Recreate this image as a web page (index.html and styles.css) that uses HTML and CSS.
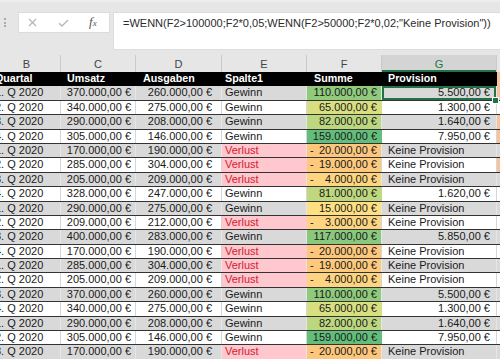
FILE: index.html
```html
<html>
<head>
<meta charset="utf-8">
<link rel="stylesheet" href="styles.css">
</head>
<body>
	<div class="toolbar">
		<div class="grip"><span></span><span></span><span></span></div>
		<div class="fx-buttons">
			<svg class="ico-x" width="9" height="9" viewBox="0 0 9 9"><path d="M1 1L8 8M8 1L1 8" stroke="#b5b5b5" stroke-width="1.2" fill="none"/></svg>
			<svg class="ico-ok" width="11" height="8" viewBox="0 0 11 8"><path d="M1 4.2L4 7L10 1" stroke="#b5b5b5" stroke-width="1.3" fill="none"/></svg>
			<span class="fx"><i>f</i><small>x</small></span>
		</div>
		<div class="formula">=WENN(F2&gt;100000;F2*0,05;WENN(F2&gt;50000;F2*0,02;"Keine Provision"))</div>
	</div>

	<div class="sheet">
		<div class="row letters">
			<div>B</div><div>C</div><div>D</div><div>E</div><div>F</div><div class="active">G</div><div></div>
		</div>
		<div class="row head">
			<div>Quartal</div><div>Umsatz</div><div>Ausgaben</div><div>Spalte1</div><div>Summe</div><div>Provision</div><div class="h-or"></div>
		</div>

		<div class="row gray">
			<div>1. Q 2020</div><div>370.000,00 €</div><div>260.000,00 €</div><div>Gewinn</div>
			<div class="s110">110.000,00 €</div><div class="num sel">5.500,00 €</div><div class="h-or"></div>
		</div>
		<div class="row">
			<div>2. Q 2020</div><div>340.000,00 €</div><div>275.000,00 €</div><div>Gewinn</div>
			<div class="s65">65.000,00 €</div><div class="num">1.300,00 €</div><div></div>
		</div>
		<div class="row gray">
			<div>3. Q 2020</div><div>290.000,00 €</div><div>208.000,00 €</div><div>Gewinn</div>
			<div class="s82">82.000,00 €</div><div class="num">1.640,00 €</div><div class="h-or"></div>
		</div>
		<div class="row">
			<div>4. Q 2020</div><div>305.000,00 €</div><div>146.000,00 €</div><div>Gewinn</div>
			<div class="s159">159.000,00 €</div><div class="num">7.950,00 €</div><div class="h-or"></div>
		</div>
		<div class="row gray">
			<div>1. Q 2020</div><div>170.000,00 €</div><div>190.000,00 €</div><div class="loss">Verlust</div>
			<div class="neg s-20"><span>-</span><span>20.000,00 €</span></div><div>Keine Provision</div><div></div>
		</div>
		<div class="row">
			<div>2. Q 2020</div><div>285.000,00 €</div><div>304.000,00 €</div><div class="loss">Verlust</div>
			<div class="neg s-19"><span>-</span><span>19.000,00 €</span></div><div>Keine Provision</div><div class="h-or"></div>
		</div>
		<div class="row gray">
			<div>3. Q 2020</div><div>205.000,00 €</div><div>209.000,00 €</div><div class="loss">Verlust</div>
			<div class="neg s-4"><span>-</span><span>4.000,00 €</span></div><div>Keine Provision</div><div></div>
		</div>
		<div class="row">
			<div>4. Q 2020</div><div>328.000,00 €</div><div>247.000,00 €</div><div>Gewinn</div>
			<div class="s81">81.000,00 €</div><div class="num">1.620,00 €</div><div></div>
		</div>
		<div class="row gray">
			<div>1. Q 2020</div><div>290.000,00 €</div><div>275.000,00 €</div><div>Gewinn</div>
			<div class="s15">15.000,00 €</div><div>Keine Provision</div><div></div>
		</div>
		<div class="row">
			<div>2. Q 2020</div><div>209.000,00 €</div><div>212.000,00 €</div><div class="loss">Verlust</div>
			<div class="neg s-3"><span>-</span><span>3.000,00 €</span></div><div>Keine Provision</div><div></div>
		</div>
		<div class="row gray">
			<div>3. Q 2020</div><div>400.000,00 €</div><div>283.000,00 €</div><div>Gewinn</div>
			<div class="s117">117.000,00 €</div><div class="num">5.850,00 €</div><div></div>
		</div>
		<div class="row">
			<div>4. Q 2020</div><div>170.000,00 €</div><div>190.000,00 €</div><div class="loss">Verlust</div>
			<div class="neg s-20"><span>-</span><span>20.000,00 €</span></div><div>Keine Provision</div><div></div>
		</div>
		<div class="row gray">
			<div>1. Q 2020</div><div>285.000,00 €</div><div>304.000,00 €</div><div class="loss">Verlust</div>
			<div class="neg s-19"><span>-</span><span>19.000,00 €</span></div><div>Keine Provision</div><div></div>
		</div>
		<div class="row">
			<div>2. Q 2020</div><div>205.000,00 €</div><div>209.000,00 €</div><div class="loss">Verlust</div>
			<div class="neg s-4"><span>-</span><span>4.000,00 €</span></div><div>Keine Provision</div><div></div>
		</div>
		<div class="row gray">
			<div>3. Q 2020</div><div>370.000,00 €</div><div>260.000,00 €</div><div>Gewinn</div>
			<div class="s110">110.000,00 €</div><div class="num">5.500,00 €</div><div></div>
		</div>
		<div class="row">
			<div>4. Q 2020</div><div>340.000,00 €</div><div>275.000,00 €</div><div>Gewinn</div>
			<div class="s65">65.000,00 €</div><div class="num">1.300,00 €</div><div></div>
		</div>
		<div class="row gray">
			<div>1. Q 2020</div><div>290.000,00 €</div><div>208.000,00 €</div><div>Gewinn</div>
			<div class="s82">82.000,00 €</div><div class="num">1.640,00 €</div><div></div>
		</div>
		<div class="row">
			<div>2. Q 2020</div><div>305.000,00 €</div><div>146.000,00 €</div><div>Gewinn</div>
			<div class="s159">159.000,00 €</div><div class="num">7.950,00 €</div><div></div>
		</div>
		<div class="row gray">
			<div>3. Q 2020</div><div>170.000,00 €</div><div>190.000,00 €</div><div class="loss">Verlust</div>
			<div class="neg s-20"><span>-</span><span>20.000,00 €</span></div><div>Keine Provision</div><div></div>
		</div>
	</div>
</body>
</html>
```

FILE: styles.css
```css
	body {
		margin: 0;
		width: 500px;
		height: 359px;
		overflow: hidden;
		background: #fff;
		font-family: "Liberation Sans", Arial, sans-serif;
		color: #1a1a1a;
	}

	/* formula bar */
	.toolbar {
		height: 55px;
		box-sizing: border-box;
		display: flex;
		align-items: flex-start;
		padding-top: 12px;
		background: #e6e6e6;
		box-shadow: inset 0 2px 0 #eeeeee;
	}
	.grip {
		width: 2px;
		margin: 6px 12px 0 4px;
		display: flex;
		flex-direction: column;
		gap: 1.5px;
	}
	.grip span {
		width: 2px;
		height: 2px;
		background: #ababab;
	}
	.fx-buttons {
		width: 92px;
		height: 21px;
		box-sizing: border-box;
		background: #fff;
		border: 1px solid #dcdcdc;
		display: flex;
		align-items: center;
	}
	.ico-x {
		margin-left: 9px;
	}
	.ico-ok {
		margin-left: 21px;
		margin-top: 1px;
	}
	.fx {
		margin-left: 20px;
		font-family: "Liberation Serif", serif;
		font-size: 13px;
		color: #555;
		line-height: 13px;
	}
	.fx small {
		font-size: 9px;
		font-style: italic;
	}
	.formula {
		flex: 1;
		height: 38px;
		box-sizing: border-box;
		margin-left: 3px;
		padding: 4px 0 0 9px;
		background: #fff;
		border: 1px solid #dcdcdc;
		border-right: none;
		font-size: 11px;
		line-height: 13px;
		color: #2b2b2b;
		white-space: nowrap;
		overflow: hidden;
	}

	/* sheet */
	.sheet {
		margin-left: -7px;
		width: 531px;
	}
	.row {
		display: grid;
		grid-template-columns: 68px 75px 86px 85px 75px 115px 27px;
		height: 14.4px;
		box-sizing: border-box;
		border-bottom: 1px solid #333;
		background: #fff;
		font-size: 11px;
		line-height: 13.4px;
	}
	.row > div {
		white-space: nowrap;
		overflow: hidden;
		border-right: 1px solid #d6d6d6;
	}
	.row.gray {
		background: #d9d9d9;
	}
	.row.gray > div {
		border-right-color: #e6e6e6;
	}

	.row > :nth-child(1) { padding-left: 2px; }
	.row > :nth-child(2) { text-align: right; padding-right: 4px; }
	.row > :nth-child(3) { text-align: right; padding-right: 9px; }
	.row > :nth-child(4) { padding-left: 3px; }
	.row > :nth-child(5) { text-align: right; padding-right: 4px; padding-left: 3px; }
	.row > :nth-child(6) { padding-left: 6px; padding-right: 6px; }
	.row > .num { text-align: right; }

	.row.letters {
		height: 17px;
		border-bottom: none;
		background: #e6e6e6;
		font-size: 11px;
		line-height: 15px;
		color: #444;
	}
	.row.letters > div {
		text-align: center;
		padding: 2px 0 0 0;
		border-right: 1px solid #cacaca;
	}
	.row.letters > .active {
		background: #d4d4d4;
		color: #217346;
		box-shadow: inset 0 -2px 0 #217346;
	}

	.row.head {
		background: #000;
		color: #fff;
		font-weight: bold;
		font-size: 10.7px;
		border-bottom: none;
	}
	.row.head > div {
		text-align: left;
		border-right: none;
	}
	.row.head > :nth-child(2) { padding-left: 6px; }
	.row.head > :nth-child(3) { padding-left: 7px; }
	.row.head > :nth-child(5) { padding-left: 7px; }

	.row > .h-or {
		background: #f5c49e;
	}

	/* Verlust highlight */
	.row > .loss {
		background: #ffc7ce;
		color: #d3202d;
		border-right-color: transparent;
	}

	/* colour scale on Summe */
	.row > [class^="s"] {
		border-right-color: transparent;
	}
	.neg {
		display: flex;
		justify-content: space-between;
	}
	.s159 { background: #63be7b; }
	.s117 { background: #89c87d; }
	.s110 { background: #8fca7d; }
	.s82 { background: #bdd780; }
	.s81 { background: #bfd880; }
	.s65 { background: #d8df81; }
	.s15 { background: #fee082; }
	.s-3 { background: #fdd580; }
	.s-4 { background: #fdd47f; }
	.s-19 { background: #fcc97d; }
	.s-20 { background: #fcc77d; }

	/* selected cell G2 */
	.row > .sel {
		position: relative;
		overflow: visible;
		box-shadow: inset 0 0 0 2px #217346;
		border-right-color: transparent;
	}
	.sel::after {
		content: "";
		position: absolute;
		right: -3px;
		bottom: -4px;
		width: 5px;
		height: 5px;
		background: #217346;
		border: 1px solid #fff;
		z-index: 2;
	}
```
